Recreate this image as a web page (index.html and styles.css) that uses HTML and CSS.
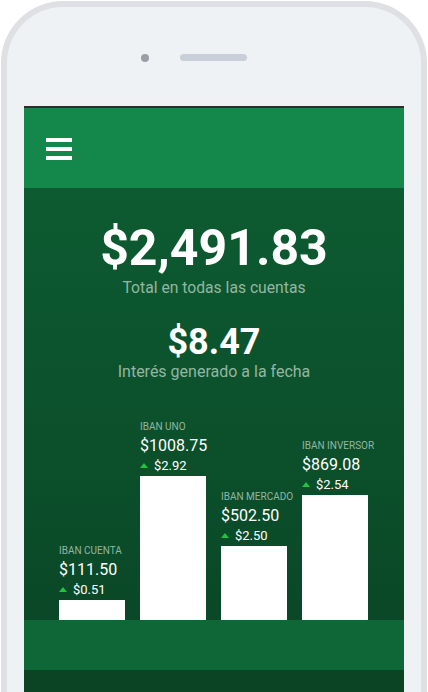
FILE: index.html
```html
<!DOCTYPE html>
<html lang="es">
<head>
<meta charset="utf-8">
<title>Cuentas</title>
<link rel="stylesheet" href="styles.css">
</head>
<body>
<div class="phone">
  <div class="phone-top">
    <span class="camera"></span>
    <span class="speaker"></span>
  </div>
  <div class="screen">
    <header class="appbar">
      <button class="menu" aria-label="Menú">
        <span></span><span></span><span></span>
      </button>
    </header>
    <main class="content">
      <section class="summary">
        <div class="total">$2,491.83</div>
        <div class="caption">Total en todas las cuentas</div>
        <div class="interest">$8.47</div>
        <div class="caption caption-2">Interés generado a la fecha</div>
      </section>
      <section class="chart">
        <div class="col">
          <div class="label">IBAN CUENTA</div>
          <div class="value">$111.50</div>
          <div class="delta"><i class="tri"></i>$0.51</div>
          <div class="bar" style="height:20px"></div>
        </div>
        <div class="col">
          <div class="label">IBAN UNO</div>
          <div class="value">$1008.75</div>
          <div class="delta"><i class="tri"></i>$2.92</div>
          <div class="bar" style="height:144px"></div>
        </div>
        <div class="col">
          <div class="label">IBAN MERCADO</div>
          <div class="value">$502.50</div>
          <div class="delta"><i class="tri"></i>$2.50</div>
          <div class="bar" style="height:74px"></div>
        </div>
        <div class="col">
          <div class="label">IBAN INVERSOR</div>
          <div class="value">$869.08</div>
          <div class="delta"><i class="tri"></i>$2.54</div>
          <div class="bar" style="height:125px"></div>
        </div>
      </section>
    </main>
    <div class="band"></div>
    <div class="bottom"></div>
  </div>
</div>
</body>
</html>
```
FILE: styles.css
```css
* { box-sizing: border-box; }
html, body {
  margin: 0;
  padding: 0;
  background: #ffffff;
  overflow: hidden;
  height: 692px;
}
body {
  font-family: Roboto, "Liberation Sans", Arial, sans-serif;
  padding: 1px 0 0 1px;
}
.phone {
  width: 426px;
  height: 760px;
  background: #eff2f5;
  border: 6px solid #dfe0e3;
  border-bottom: none;
  border-radius: 62px 62px 0 0;
  padding: 0 17px;
}
.phone-top {
  height: 99px;
  position: relative;
}
.camera {
  position: absolute;
  left: 117px;
  top: 47px;
  width: 8px;
  height: 8px;
  border-radius: 50%;
  background: #9a9fa7;
}
.speaker {
  position: absolute;
  left: 156px;
  top: 47px;
  width: 67px;
  height: 7px;
  border-radius: 4px;
  background: #c8cfd8;
}
.screen {
  width: 380px;
  border-top: 2px solid #2d2d2d;
  background: #0a4424;
}
.appbar {
  height: 80px;
  background: #13884a;
  display: flex;
  align-items: center;
  padding-left: 22px;
}
.menu {
  border: 0;
  background: none;
  padding: 0;
  display: flex;
  flex-direction: column;
  gap: 5px;
  margin-top: 2px;
}
.menu span {
  display: block;
  width: 26px;
  height: 4px;
  background: #ffffff;
}
.content {
  background: linear-gradient(#0d5b31, #0a4827);
  height: 432px;
  display: flex;
  flex-direction: column;
  justify-content: space-between;
}
.summary {
  text-align: center;
  color: #ffffff;
  padding-top: 30px;
}
.total {
  font-size: 50px;
  font-weight: 700;
  line-height: 60px;
}
.caption {
  font-size: 15.7px;
  line-height: 20px;
  color: #93b6a2;
}
.interest {
  font-size: 36px;
  font-weight: 700;
  line-height: 38px;
  margin-top: 25px;
}
.caption-2 {
  font-size: 16px;
  line-height: 18px;
  margin-top: 2px;
}
.chart {
  display: flex;
  align-items: flex-end;
  gap: 15px;
  padding-left: 35px;
}
.col {
  width: 66px;
  color: #ffffff;
  white-space: nowrap;
}
.label {
  font-size: 10px;
  line-height: 14px;
  color: #93b6a2;
}
.value {
  font-size: 16px;
  line-height: 24px;
}
.delta {
  font-size: 13px;
  line-height: 16px;
  display: flex;
  align-items: center;
  gap: 6px;
  margin-bottom: 2px;
}
.tri {
  width: 0;
  height: 0;
  border-left: 4.5px solid transparent;
  border-right: 4.5px solid transparent;
  border-bottom: 5px solid #22c43f;
  margin-top: -1px;
}
.bar {
  width: 66px;
  background: #ffffff;
}
.band {
  height: 50px;
  background: #0f6636;
}
.bottom {
  height: 60px;
  background: #0a4424;
}
```
